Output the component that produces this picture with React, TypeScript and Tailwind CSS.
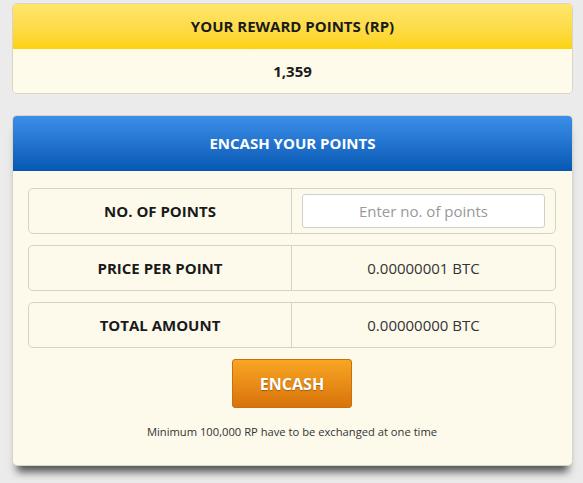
import React from "react";

export default function App() {
  const font = { fontFamily: '"Open Sans", "Noto Sans", sans-serif' };
  const rows = [
    { label: "PRICE PER POINT", value: "0.00000001 BTC" },
    { label: "TOTAL AMOUNT", value: "0.00000000 BTC" },
  ];
  return (
    <div className="w-[583px] h-[483px] bg-[#ebebeb] pt-[3px] pl-[12px] pr-[10px]" style={font}>
      <div className="rounded-[5px] border border-[#d9d5c6] overflow-hidden">
        <div className="h-[45px] flex items-center justify-center bg-gradient-to-b from-[#fde66c] to-[#fdd204] text-[15px] font-bold text-[#1a1a1a]">
          YOUR REWARD POINTS (RP)
        </div>
        <div className="h-[44px] flex items-center justify-center bg-[#fefbeb] text-[15px] font-bold text-[#1a1a1a]">
          1,359
        </div>
      </div>

      <div className="mt-[21px] rounded-[5px] border border-[#d9d5c6] bg-[#fdfaec] shadow-[0_11px_8px_-5px_rgba(0,0,0,0.65)]">
        <div className="h-[55px] rounded-t-[4px] flex items-center justify-center bg-gradient-to-b from-[#3b8fe8] to-[#0458b3] text-[15px] font-bold text-white">
          ENCASH YOUR POINTS
        </div>
        <div className="pt-[17px] pl-[15px] pr-[16px] pb-[24px] flex flex-col">
          <div className="h-[46px] flex rounded-[5px] border border-[#d6d2c2]">
            <div className="w-[263px] flex items-center justify-center border-r border-[#d6d2c2] text-[15px] font-bold text-[#1a1a1a]">
              NO. OF POINTS
            </div>
            <div className="flex-1 flex items-center px-[10px]">
              <input
                className="w-full h-[34px] bg-white border border-[#cfcfcf] rounded-[3px] text-center text-[15px] text-[#333] placeholder:text-[#999] outline-none"
                placeholder="Enter no. of points"
                style={font}
              />
            </div>
          </div>
          {rows.map((r) => (
            <div key={r.label} className="mt-[11px] h-[46px] flex rounded-[5px] border border-[#d6d2c2]">
              <div className="w-[263px] flex items-center justify-center border-r border-[#d6d2c2] text-[15px] font-bold text-[#1a1a1a]">
                {r.label}
              </div>
              <div className="flex-1 flex items-center justify-center text-[15px] text-[#333]">
                {r.value}
              </div>
            </div>
          ))}
          <div className="flex justify-center mt-[11px]">
            <button
              className="w-[120px] h-[49px] rounded-[3px] border border-[#c8700c] bg-gradient-to-b from-[#f9a623] to-[#d8730a] text-white text-[16px] font-bold [text-shadow:0_1px_1px_rgba(0,0,0,0.3)]"
              style={font}
            >
              ENCASH
            </button>
          </div>
          <div className="mt-[16px] text-center text-[11.2px] text-[#333]">
            Minimum 100,000 RP have to be exchanged at one time
          </div>
        </div>
      </div>
    </div>
  );
}
